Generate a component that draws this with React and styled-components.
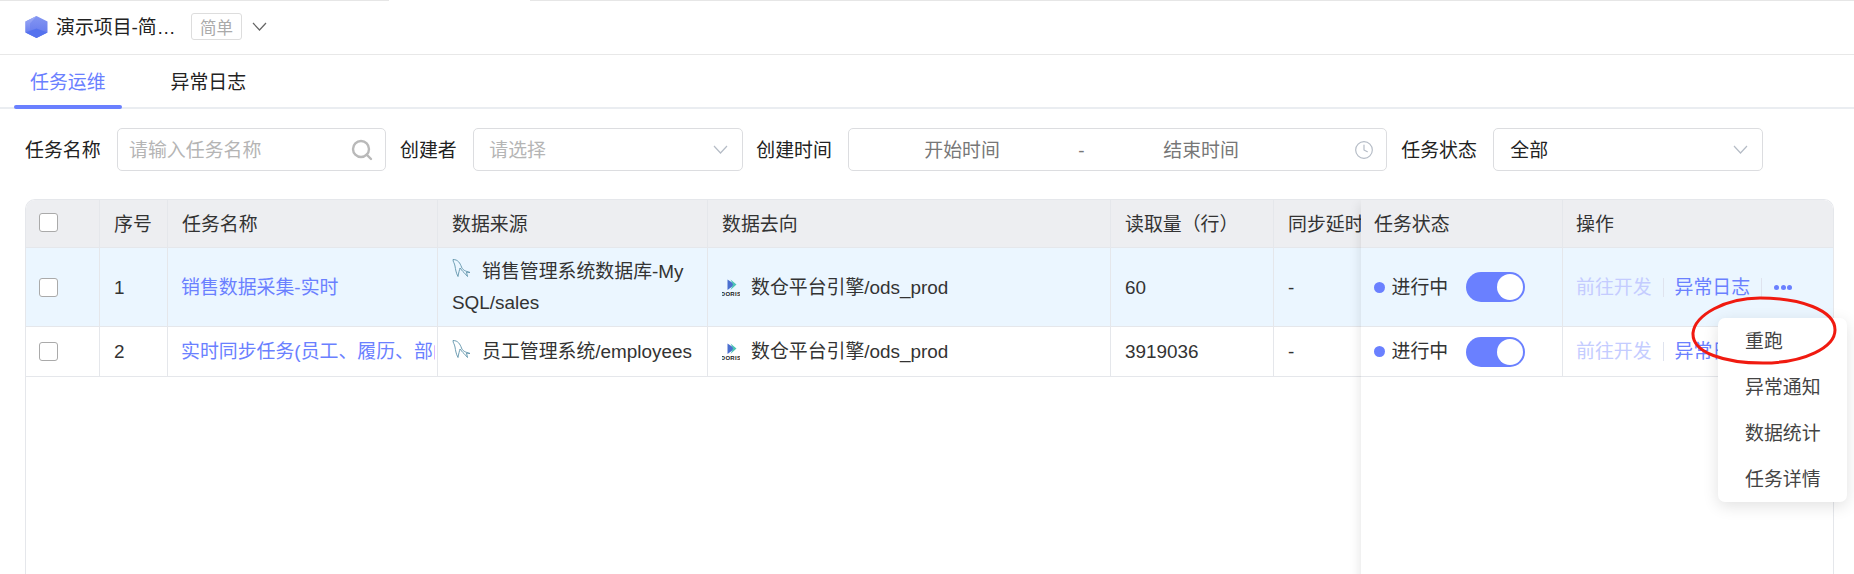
import React from 'react'
import styled, { createGlobalStyle } from 'styled-components'
import { Search, Clock } from 'lucide-react'

const GlobalStyle = createGlobalStyle`
    html, body {
        margin: 0;
        padding: 0;
        background: #fff;
    }
    * {
        box-sizing: border-box;
    }
`

const PRIMARY = '#6a80ff'
const LINE = '#e5e7eb'

const Page = styled.div`
    position: relative;
    width: 1854px;
    height: 574px;
    overflow: hidden;
    font-family: "Liberation Sans", "Noto Sans CJK SC", sans-serif;
    font-size: 18.9px;
    color: #333;
`

const TopEdge = styled.div`
    display: flex;
    justify-content: space-between;
    height: 1px;
`
const TopEdgePiece = styled.div`
    width: ${p => p.$width}px;
    background: #e6e6e6;
`

const Header = styled.header`
    display: flex;
    align-items: center;
    height: 54px;
    padding: 0 0 2px 25px;
    border-bottom: 1px solid #e8e8e8;
`
const ProjectName = styled.span`
    flex: none;
    width: 120px;
    margin-left: 8px;
    padding-bottom: 2px;
    color: #222;
    white-space: nowrap;
`
const Tag = styled.span`
    display: flex;
    align-items: center;
    justify-content: center;
    width: 51px;
    height: 27px;
    margin-left: 15px;
    margin-right: 10px;
    border: 1px solid #ddd;
    border-radius: 3px;
    color: #aaa;
    font-size: 16.5px;
`

const TabBar = styled.nav`
    display: flex;
    height: 54px;
    padding-left: 14px;
    gap: 33px;
    border-bottom: 2px solid #eaedf1;
`
const Tab = styled.div`
    position: relative;
    display: flex;
    align-items: center;
    padding: 0 16px 2px;
    color: ${p => (p.$active ? PRIMARY : '#222')};

    ${p => p.$active && `
        &::after {
            content: '';
            position: absolute;
            left: 0;
            right: 0;
            bottom: -2px;
            height: 4px;
            border-radius: 2px;
            background: ${PRIMARY};
        }
    `}
`

const FilterRow = styled.div`
    display: flex;
    align-items: center;
    height: 43px;
    margin-top: 19px;
    padding-left: 25px;
`
const Label = styled.label`
    margin-left: ${p => p.$gap || 0}px;
    margin-right: 16.5px;
    padding-bottom: 2px;
    color: #222;
    white-space: nowrap;
`
const Control = styled.div`
    display: flex;
    align-items: center;
    justify-content: space-between;
    flex: none;
    width: ${p => p.$width}px;
    height: 43px;
    padding: 0 ${p => p.$padRight || 14}px 0 ${p => p.$pad || 11}px;
    border: 1px solid #dcdde0;
    border-radius: 5px;
    background: #fff;
`
const Placeholder = styled.span`
    padding-bottom: 2px;
    color: #b5b5b5;
`
const Value = styled.span`
    padding-bottom: 2px;
    color: #222;
`
const RangeText = styled.span`
    flex: none;
    width: ${p => p.$width}px;
    padding-bottom: 2px;
    color: #777;
`
const RangeDash = styled(RangeText)`
    padding: 3px 0 0;
`
const RangeInner = styled.div`
    display: flex;
    align-items: center;
    padding-left: 64px;
`

const Card = styled.section`
    display: flex;
    height: 420px;
    margin: 28px 20px 0 25px;
    border: 1px solid ${LINE};
    border-bottom: none;
    border-radius: 10px 10px 0 0;
    overflow: hidden;
`
const ScrollPart = styled.div`
    flex: 1;
    min-width: 0;
    overflow: hidden;
`
const FixedPart = styled.div`
    flex: none;
    width: 472px;
    background: #fff;
    box-shadow: -6px 0 10px -4px rgba(0, 0, 0, 0.09);
    z-index: 1;
`
const Table = styled.table`
    table-layout: fixed;
    width: ${p => p.$width}px;
    border-collapse: separate;
    border-spacing: 0;
`
const Th = styled.th`
    height: 48px;
    padding: 0 0 3px ${p => p.$pad || 14}px;
    background: #edeef1;
    border-bottom: 1px solid ${LINE};
    border-right: ${p => (p.$last ? 'none' : `1px solid ${LINE}`)};
    text-align: left;
    font-weight: 400;
    color: #333;
    white-space: nowrap;
    overflow: hidden;
`
const Tr = styled.tr`
    height: ${p => p.$height}px;
    background: ${p => (p.$active ? '#ebf6ff' : '#fff')};
`
const Td = styled.td`
    padding: 0 ${p => p.$padRight || 0}px 0 ${p => p.$pad || 14}px;
    border-bottom: 1px solid ${LINE};
    border-right: ${p => (p.$last ? 'none' : `1px solid ${LINE}`)};
    line-height: 31px;
    color: #333;
    word-break: break-all;
    vertical-align: middle;
`
const TaskLink = styled.div`
    margin: 0 2px 0 -1px;
    color: ${PRIMARY};
    white-space: nowrap;
    overflow: hidden;
`
const Check = styled.span`
    display: block;
    width: 19px;
    height: 19px;
    border: 1px solid #aaa;
    border-radius: 3px;
    background: #fff;
`
const SourceIcon = styled.svg`
    display: inline-block;
    vertical-align: ${p => p.$align}px;
    margin-right: 11px;
`

const StatusCell = styled.div`
    display: flex;
    align-items: center;
`
const Dot = styled.span`
    width: 11px;
    height: 11px;
    margin-right: 6.5px;
    border-radius: 50%;
    background: ${PRIMARY};
`
const Switch = styled.span`
    display: flex;
    justify-content: flex-end;
    align-items: center;
    width: 59px;
    height: 30px;
    margin-left: 18px;
    padding-right: 2px;
    border-radius: 15px;
    background: ${PRIMARY};
`
const Knob = styled.span`
    width: 26px;
    height: 26px;
    border-radius: 50%;
    background: #fff;
`

const Ops = styled.div`
    display: flex;
    align-items: center;
    white-space: nowrap;
`
const OpLink = styled.span`
    color: ${p => (p.$disabled ? '#c4ccff' : PRIMARY)};
`
const OpDivider = styled.span`
    width: 1px;
    height: 19px;
    margin: 0 11px;
    background: #dfe3ee;
`
const MoreDots = styled.span`
    display: flex;
    gap: 1.5px;
    margin-left: 1px;

    i {
        width: 5px;
        height: 5px;
        border-radius: 50%;
        background: ${PRIMARY};
    }
`

const Menu = styled.ul`
    position: absolute;
    left: 1718px;
    top: 318px;
    width: 129px;
    margin: 0;
    padding: 0;
    list-style: none;
    background: #fff;
    border-radius: 7px;
    box-shadow: 0 4px 16px rgba(0, 0, 0, 0.12);
    z-index: 2;
`
const MenuItem = styled.li`
    display: flex;
    align-items: center;
    height: 46px;
    padding: 0 0 3px 27px;
    color: #444;
`
const Circled = styled.svg`
    position: absolute;
    left: 1690px;
    top: 295px;
    z-index: 3;
`

const Chevron = ({ width, color }) => (
    <svg width={width} height={width * 0.6} viewBox="0 0 15 9" fill="none">
        <path d="M1 1l6.5 7L14 1" stroke={color} strokeWidth="1.2" />
    </svg>
)

const CubeLogo = () => (
    <svg width="23" height="22" viewBox="0 0 23 22">
        <defs>
            <linearGradient id="cubeLeft" x1="0" y1="0" x2="0" y2="1">
                <stop offset="0" stopColor="#a2aef5" />
                <stop offset="1" stopColor="#6a80f0" />
            </linearGradient>
            <linearGradient id="cubeRight" x1="0" y1="0" x2="0" y2="1">
                <stop offset="0" stopColor="#8496f2" />
                <stop offset="1" stopColor="#6076ec" />
            </linearGradient>
        </defs>
        <path d="M11.5 0L22.5 5.5V16.5L11.5 22L0.5 16.5V5.5Z" fill="url(#cubeRight)" />
        <path d="M11.5 0L0.5 5.5V16.5L5 14V7.5Z" fill="url(#cubeLeft)" />
        <path d="M0.5 16.5L11.5 22L22.5 16.5L11.5 12.5Z" fill="#5572ee" />
    </svg>
)

const MysqlIcon = ({ align }) => (
    <SourceIcon $align={align} width="19" height="18" viewBox="0 0 19 18" fill="none">
        <path
            d="M1 .5C6 .5 8 4 9.500 8c1 3 3.500 4 8.500 5.500l-3.500-.5 1 4.500-3.500-4C10 12 9 10 8 9c-.5 2-1.500 5-2 8.500C4 14 3.500 10 3 7 2.500 4 1 3 1 .5z"
            stroke="#5f93aa"
            strokeWidth="0.9"
        />
    </SourceIcon>
)

const DorisIcon = () => (
    <SourceIcon $align={-3} width="18" height="18" viewBox="0 0 18 18">
        <path d="M5.500.5L13 5.500 5.500 11z" fill="#4a6fd0" />
        <path d="M8.500.5l6 5-6 5.500L11 5.500z" fill="#4cc4b4" />
        <text x="9" y="17" textAnchor="middle" fontSize="6" fontWeight="700" letterSpacing="0.3" fill="#222" fontFamily="Liberation Sans, sans-serif">DORIS</text>
    </SourceIcon>
)

const rows = [
    {
        id: 1,
        name: '销售数据采集-实时',
        source: '销售管理系统数据库-MySQL/sales',
        read: '60',
        height: 79,
        iconAlign: 1,
        active: true,
    },
    {
        id: 2,
        name: '实时同步任务(员工、履历、部门)',
        source: '员工管理系统/employees',
        read: '3919036',
        height: 50,
        iconAlign: 0,
    },
]

const menuItems = ['重跑', '异常通知', '数据统计', '任务详情']

const App = () => (
    <Page>
        <GlobalStyle />
        <TopEdge>
            <TopEdgePiece $width={389} />
            <TopEdgePiece $width={1324} />
        </TopEdge>
        <Header>
            <CubeLogo />
            <ProjectName>演示项目-简…</ProjectName>
            <Tag>简单</Tag>
            <Chevron width={15} color="#666" />
        </Header>
        <TabBar>
            <Tab $active>任务运维</Tab>
            <Tab>异常日志</Tab>
        </TabBar>

        <FilterRow>
            <Label>任务名称</Label>
            <Control $width={269} $padRight={11}>
                <Placeholder>请输入任务名称</Placeholder>
                <Search size={24} strokeWidth={2.4} color="#b9b9b9" />
            </Control>
            <Label $gap={14}>创建者</Label>
            <Control $width={270} $pad={15}>
                <Placeholder>请选择</Placeholder>
                <Chevron width={15} color="#b5bcc6" />
            </Control>
            <Label $gap={13}>创建时间</Label>
            <Control $width={539} $padRight={12}>
                <RangeInner>
                    <RangeText $width={154}>开始时间</RangeText>
                    <RangeDash $width={85}>-</RangeDash>
                    <RangeText $width={90}>结束时间</RangeText>
                </RangeInner>
                <Clock size={20} strokeWidth={1.4} color="#b5bcc6" />
            </Control>
            <Label $gap={14}>任务状态</Label>
            <Control $width={270} $pad={16}>
                <Value>全部</Value>
                <Chevron width={15} color="#b5bcc6" />
            </Control>
        </FilterRow>

        <Card>
            <ScrollPart>
                <Table $width={1400}>
                    <colgroup>
                        <col width="74" />
                        <col width="68" />
                        <col width="270" />
                        <col width="270" />
                        <col width="403" />
                        <col width="163" />
                        <col width="152" />
                    </colgroup>
                    <thead>
                        <tr>
                            <Th $pad={13}><Check /></Th>
                            <Th>序号</Th>
                            <Th>任务名称</Th>
                            <Th>数据来源</Th>
                            <Th>数据去向</Th>
                            <Th>读取量（行）</Th>
                            <Th>同步延时（秒）</Th>
                        </tr>
                    </thead>
                    <tbody>
                        {rows.map(row => (
                            <Tr key={row.id} $height={row.height} $active={row.active}>
                                <Td $pad={13}><Check /></Td>
                                <Td>{row.id}</Td>
                                <Td><TaskLink>{row.name}</TaskLink></Td>
                                <Td $padRight={14}>
                                    <MysqlIcon align={row.iconAlign} />
                                    {row.source}
                                </Td>
                                <Td>
                                    <DorisIcon />
                                    数仓平台引擎/ods_prod
                                </Td>
                                <Td>{row.read}</Td>
                                <Td>-</Td>
                            </Tr>
                        ))}
                    </tbody>
                </Table>
            </ScrollPart>
            <FixedPart>
                <Table $width={472}>
                    <colgroup>
                        <col width="202" />
                        <col width="270" />
                    </colgroup>
                    <thead>
                        <tr>
                            <Th $pad={13}>任务状态</Th>
                            <Th $pad={13} $last>操作</Th>
                        </tr>
                    </thead>
                    <tbody>
                        {rows.map(row => (
                            <Tr key={row.id} $height={row.height} $active={row.active}>
                                <Td $pad={13}>
                                    <StatusCell>
                                        <Dot />
                                        进行中
                                        <Switch><Knob /></Switch>
                                    </StatusCell>
                                </Td>
                                <Td $pad={13} $last>
                                    <Ops>
                                        <OpLink $disabled>前往开发</OpLink>
                                        <OpDivider />
                                        <OpLink>异常日志</OpLink>
                                        <OpDivider />
                                        <MoreDots><i /><i /><i /></MoreDots>
                                    </Ops>
                                </Td>
                            </Tr>
                        ))}
                    </tbody>
                </Table>
            </FixedPart>
        </Card>

        <Menu>
            {menuItems.map(item => <MenuItem key={item}>{item}</MenuItem>)}
        </Menu>
        <Circled width="150" height="72" viewBox="0 0 150 72" fill="none">
            <path
                d="M3 38C5 20 35 3 70 3c40 0 75 12 75 32 0 17-30 33-72 33C35 68 2 58 3 38z"
                stroke="#f01a10"
                strokeWidth="3"
            />
        </Circled>
    </Page>
)

export default App
